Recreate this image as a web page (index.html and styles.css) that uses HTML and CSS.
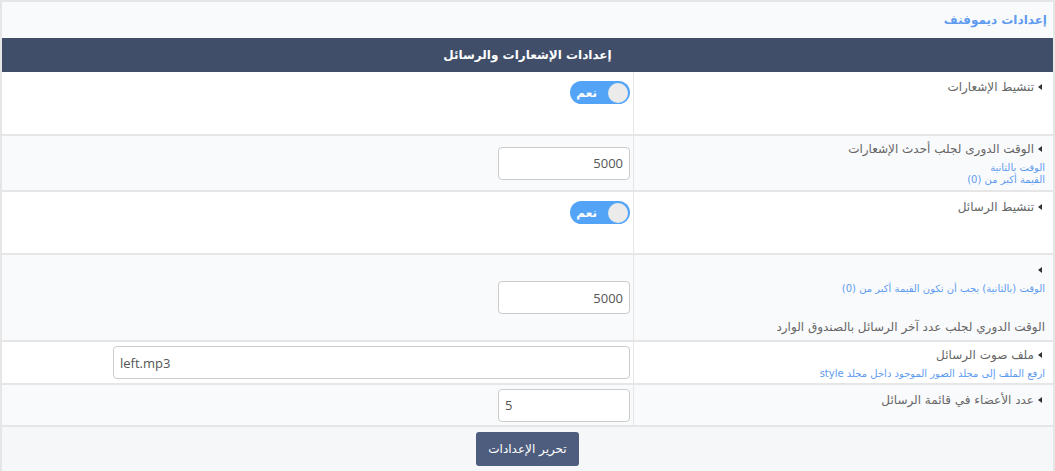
FILE: index.html
```html
<!DOCTYPE html>
<html lang="ar" dir="rtl">
<head>
<meta charset="utf-8">
<title>إعدادات ديموفنف</title>
<link rel="stylesheet" href="styles.css">
</head>
<body>
<div class="panel">
  <div class="title">إعدادات ديموفنف</div>
  <div class="head">إعدادات الإشعارات والرسائل</div>

  <div class="row r1">
    <div class="lab pad6"><div class="name"><i class="tri"></i>تنشيط الإشعارات</div></div>
    <div class="val top"><span class="switch"><span class="knob"></span><span class="txt">نعم</span></span></div>
  </div>

  <div class="row alt">
    <div class="lab pad4">
      <div class="name"><i class="tri"></i>الوقت الدورى لجلب أحدث الإشعارات</div>
      <div class="desc">الوقت بالثانية<br>القيمة أكبر من (0)</div>
    </div>
    <div class="val"><input class="field small" type="text" value="5000"></div>
  </div>

  <div class="row r3">
    <div class="lab pad6"><div class="name"><i class="tri"></i>تنشيط الرسائل</div></div>
    <div class="val top"><span class="switch"><span class="knob"></span><span class="txt">نعم</span></span></div>
  </div>

  <div class="row alt">
    <div class="lab pad6">
      <div class="name"><i class="tri"></i></div>
      <div class="desc">الوقت (بالثانية) يجب أن تكون القيمة أكبر من (0)</div>
      <div class="name note">الوقت الدوري لجلب عدد آخر الرسائل بالصندوق الوارد</div>
    </div>
    <div class="val"><input class="field small" type="text" value="5000"></div>
  </div>

  <div class="row">
    <div class="lab pad4 tight">
      <div class="name"><i class="tri"></i>ملف صوت الرسائل</div>
      <div class="desc">ارفع الملف إلى مجلد الصور الموجود داخل مجلد style</div>
    </div>
    <div class="val"><input class="field wide" type="text" dir="ltr" value="left.mp3"></div>
  </div>

  <div class="row alt r6">
    <div class="lab pad6"><div class="name"><i class="tri"></i>عدد الأعضاء في قائمة الرسائل</div></div>
    <div class="val"><input class="field small" type="text" dir="ltr" value="5"></div>
  </div>

  <div class="foot"><button class="btn" type="button">تحرير الإعدادات</button></div>
</div>
</body>
</html>
```

FILE: styles.css
```css
* { box-sizing: border-box; }
html, body { margin: 0; padding: 0; background: #fff; }
body {
  font-family: "DejaVu Sans", "Open Sans", sans-serif;
  font-size: 12px;
  color: #666;
  direction: rtl;
}
.panel {
  width: 1055px;
  height: 471px;
  border: 2px solid #e6e6e6;
  border-bottom: 0;
  background: #f6f7f9;
  overflow: hidden;
}
.title {
  height: 36px;
  line-height: 36px;
  padding: 0 6px;
  background: #f9fafc;
  color: #5e9bef;
  font-weight: bold;
  font-size: 12px;
}
.head {
  height: 34px;
  line-height: 34px;
  background: #414e69;
  color: #fff;
  font-weight: bold;
  text-align: center;
  font-size: 12px;
}
.row {
  display: grid;
  grid-template-columns: 420px 1fr;
  background: #fff;
  border-bottom: 2px solid #e6e6e6;
}
.row.alt { background: #f9fafc; }
.row.r1 { min-height: 64px; }
.row.r3 { min-height: 63px; }
.row.r6 { min-height: 42px; }
.lab {
  padding: 6px 8px 4px 10px;
  border-left: 1px solid #e6e6e6;
}
.lab.pad4 { padding-top: 4px; }
.lab.pad6 { padding-top: 6px; }
.lab.tight { padding-bottom: 3px; }
.name {
  line-height: 18px;
  min-height: 18px;
  color: #666;
  font-size: 12px;
  display: flex;
  align-items: center;
}
.tri {
  display: inline-block;
  width: 0;
  height: 0;
  border-top: 3px solid transparent;
  border-bottom: 3px solid transparent;
  border-right: 4px solid #333;
  margin-left: 4px;
  margin-right: 3px;
}
.desc {
  color: #5e9bef;
  font-size: 10px;
  line-height: 12px;
  margin-top: 4px;
}
.note { margin-top: 23px; }
.val {
  display: flex;
  align-items: center;
  padding: 3px 3px;
}
.val.top { align-items: flex-start; padding-top: 9px; }
.switch {
  display: flex;
  align-items: center;
  width: 60px;
  height: 23px;
  padding: 0 2px;
  border-radius: 12px;
  background: #53a4f6;
}
.knob {
  width: 20px;
  height: 20px;
  border-radius: 50%;
  background: #ebebeb;
}
.txt {
  color: #fff;
  font-weight: bold;
  font-size: 12px;
  margin-right: 11px;
  line-height: 20px;
}
.field {
  height: 33px;
  border: 1px solid #ccc;
  border-radius: 4px;
  background: #fff;
  color: #555;
  font-family: "Open Sans", "DejaVu Sans", sans-serif;
  font-size: 13px;
  padding: 0 6px;
}
.field.small { width: 132px; }
.field.wide { width: 517px; }
.foot {
  display: flex;
  justify-content: center;
  padding-top: 5px;
  background: #f6f7f9;
}
.btn {
  width: 103px;
  height: 34px;
  border: 0;
  border-radius: 3px;
  background: #4e5d7e;
  color: #fff;
  font-family: "DejaVu Sans", sans-serif;
  font-size: 12px;
}
```
